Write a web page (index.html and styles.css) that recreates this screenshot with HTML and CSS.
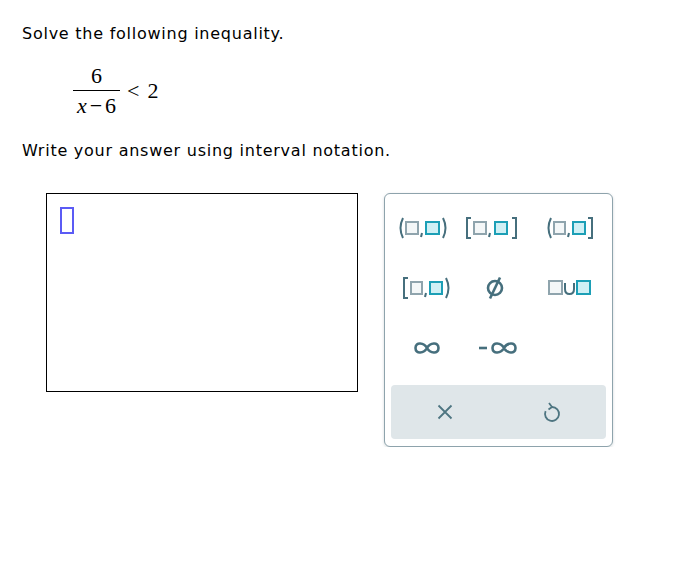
FILE: index.html
```html
<!DOCTYPE html>
<html>
<head>
<meta charset="utf-8">
<link rel="stylesheet" href="styles.css">
</head>
<body>
<div class="page">
  <p class="prompt first">Solve the following inequality.</p>
  <div class="math">
    <span class="frac">
      <span class="num">6</span>
      <span class="den"><i>x</i><span class="op">&minus;</span>6</span>
    </span>
    <span class="rel">&lt;</span><span class="rhs">2</span>
  </div>
  <p class="prompt second">Write your answer using interval notation.</p>

  <div class="work">
    <div class="answer"><span class="cursor"></span></div>
    <div class="keypad">
      <div class="keys">
        <button class="key shift-r" title="open interval">
          <svg width="54" height="24" viewBox="0 0 54 24">
            <path class="ic" d="M6 2 Q1 12 6 22"/>
            <rect class="bx-a" x="9" y="6" width="12" height="12"/>
            <path class="ic" d="M25 17 L24 21"/>
            <rect class="bx-b" x="29" y="6" width="13" height="12"/>
            <path class="ic" d="M46 2 Q51 12 46 22"/>
          </svg>
        </button>
        <button class="key shift-l" title="closed interval">
          <svg width="56" height="24" viewBox="0 0 56 24">
            <path class="ic" d="M7 2 H3 V22 H7"/>
            <rect class="bx-a" x="10" y="6" width="12" height="12"/>
            <path class="ic" d="M26 17 L25 21"/>
            <rect class="bx-b" x="31" y="6" width="12" height="12"/>
            <path class="ic" d="M48 2 H52 V22 H48"/>
          </svg>
        </button>
        <button class="key" title="left open right closed">
          <svg width="50" height="24" viewBox="0 0 50 24">
            <path class="ic" d="M6 2 Q1 12 6 22"/>
            <rect class="bx-a" x="9" y="6" width="11" height="12"/>
            <path class="ic" d="M24 17 L23 21"/>
            <rect class="bx-b" x="28" y="6" width="12" height="12"/>
            <path class="ic" d="M43 2 H47 V22 H43"/>
          </svg>
        </button>

        <button class="key" title="left closed right open">
          <svg width="52" height="24" viewBox="0 0 52 24">
            <path class="ic" d="M7 2 H3 V22 H7"/>
            <rect class="bx-a" x="10" y="6" width="11" height="12"/>
            <path class="ic" d="M25 17 L24 21"/>
            <rect class="bx-b" x="29" y="6" width="12" height="12"/>
            <path class="ic" d="M45 2 Q50 12 45 22"/>
          </svg>
        </button>
        <button class="key shift-l2" title="empty set">
          <svg width="22" height="24" viewBox="0 0 22 24">
            <circle class="ic thick" cx="11" cy="12" r="7"/>
            <path class="ic thick" d="M16 1.5 L6 22.5"/>
          </svg>
        </button>
        <button class="key" title="union">
          <svg width="44" height="16" viewBox="0 0 44 16">
            <rect class="bx-a" x="1" y="1" width="13" height="13"/>
            <path class="ic" d="M17 3 V9 Q17 14 21.5 14 Q26 14 26 9 V3"/>
            <rect class="bx-b" x="29" y="1" width="13" height="13"/>
          </svg>
        </button>

        <button class="key" title="infinity">
          <svg width="28" height="16" viewBox="0 0 28 16">
            <path class="ic thick" d="M14 8 C11 2.5 2.5 1.5 2.5 8 C2.5 14.5 11 13.5 14 8 C17 2.5 25.5 1.5 25.5 8 C25.5 14.5 17 13.5 14 8 Z"/>
          </svg>
        </button>
        <button class="key" title="negative infinity">
          <svg width="42" height="16" viewBox="0 0 42 16">
            <path class="ic thick" d="M2 8 H10"/>
            <path class="ic thick" d="M27 8 C24 2.5 15.5 1.5 15.5 8 C15.5 14.5 24 13.5 27 8 C30 2.5 38.5 1.5 38.5 8 C38.5 14.5 30 13.5 27 8 Z"/>
          </svg>
        </button>
        <span class="key empty"></span>
      </div>
      <div class="actions">
        <button class="act" title="clear">
          <svg width="16" height="16" viewBox="0 0 16 16">
            <path class="ic x" d="M1.5 1.5 L14.5 14.5 M14.5 1.5 L1.5 14.5"/>
          </svg>
        </button>
        <button class="act" title="undo">
          <svg width="18" height="22" viewBox="0 0 18 22">
            <path class="ic x" d="M9 6 A7 7 0 1 1 2.6 10.2"/>
            <path class="ic x" d="M6 2 L9 6 L5.5 8.5"/>
          </svg>
        </button>
      </div>
    </div>
  </div>
</div>
</body>
</html>
```
FILE: styles.css
```css
html, body {
  margin: 0;
  padding: 0;
  background: #ffffff;
}

.page {
  padding: 24px 0 0 22px;
  font-family: "DejaVu Sans", Verdana, sans-serif;
  font-size: 16px;
  color: #000;
}

.prompt {
  margin: 0;
  line-height: 20px;
  letter-spacing: 0.75px;
}

.math {
  display: flex;
  align-items: center;
  margin: 20px 0 0 51px;
  font-family: "Liberation Serif", "Times New Roman", serif;
  font-size: 22px;
  height: 54px;
}

.frac {
  display: inline-flex;
  flex-direction: column;
  align-items: center;
}

.num {
  line-height: 22px;
  padding: 0 0 3px;
  border-bottom: 1px solid #000;
  width: 47px;
  text-align: center;
}

.den {
  line-height: 22px;
  padding-top: 4px;
}

.den i {
  font-style: italic;
}

.op {
  margin: 0 3px;
}

.rel {
  margin-left: 7px;
  margin-right: 8px;
}

.second {
  margin-top: 23px;
}

.work {
  display: flex;
  align-items: flex-start;
  gap: 26px;
  margin: 32px 0 0 24px;
}

.answer {
  border: 1px solid #000;
  padding: 13px 0 0 13px;
  width: 297px;
  height: 184px;
}

.cursor {
  display: block;
  width: 10px;
  height: 23px;
  border: 2px solid #5b5bf5;
}

.keypad {
  width: 215px;
  padding: 4px 6px 7px;
  border: 1px solid #8ea3ac;
  border-radius: 6px;
  box-shadow: 0 1px 3px rgba(40, 70, 80, 0.2);
  background: #fff;
}

.keys {
  display: grid;
  grid-template-columns: repeat(3, 1fr);
  grid-auto-rows: 60px;
  margin-bottom: 7px;
}

.key {
  display: flex;
  align-items: center;
  justify-content: center;
  background: none;
  border: 0;
  padding: 0;
  margin: 0;
}

.shift-l svg {
  margin-right: 12px;
}

.shift-r svg {
  margin-right: 6px;
}

.shift-l2 svg {
  margin-right: 6px;
}

.actions {
  display: grid;
  grid-template-columns: 1fr 1fr;
  height: 54px;
  background: #dfe6e9;
  border-radius: 4px;
}

.act {
  display: flex;
  align-items: center;
  justify-content: center;
  background: none;
  border: 0;
  padding: 0;
}

.ic {
  fill: none;
  stroke: #466f7d;
  stroke-width: 2;
  stroke-linecap: butt;
}

.ic.thick {
  stroke-width: 2.6;
}

.ic.x {
  stroke: #4e7581;
  stroke-width: 1.8;
}

.bx-a {
  fill: #f4f7f8;
  stroke: #8fa4ad;
  stroke-width: 2;
}

.bx-b {
  fill: #cff0f5;
  stroke: #1c9fb6;
  stroke-width: 2;
}
```
